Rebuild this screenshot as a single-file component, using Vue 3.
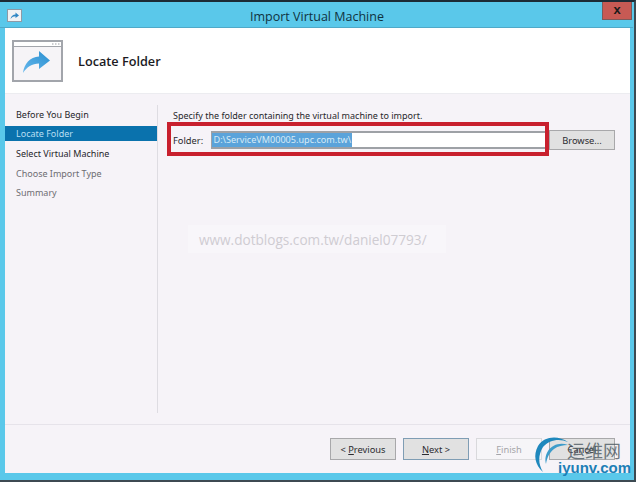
<script setup>
const steps = [
  { label: 'Before You Begin', state: 'normal' },
  { label: 'Locate Folder', state: 'active' },
  { label: 'Select Virtual Machine', state: 'normal' },
  { label: 'Choose Import Type', state: 'muted' },
  { label: 'Summary', state: 'muted' }
]
</script>

<template>
  <div class="page">
    <div class="window">
      <div class="titlebar">
        <svg class="app-icon" width="15" height="13" viewBox="0 0 15 13">
          <rect x="0.5" y="0.5" width="14" height="12" fill="#f2f2f4" stroke="#8e9aa6" />
          <path d="M3.5 10 C4 7 6 5.5 8.500 5.500 L8.500 3.500 L12 6.500 L8.500 9 L8.500 7.300 C6.500 7.300 5 8 3.500 10Z" fill="#2f86c4" />
        </svg>
        <div class="title">Import Virtual Machine</div>
        <div class="close">x</div>
      </div>
      <div class="client">
        <div class="header">
          <svg class="wizard-icon" width="51" height="42" viewBox="0 0 51 42">
            <defs>
              <linearGradient id="arrowFill" x1="0" y1="1" x2="1" y2="0">
                <stop offset="0" stop-color="#67b8ec" />
                <stop offset="1" stop-color="#2a8fd0" />
              </linearGradient>
            </defs>
            <rect x="1" y="1" width="49" height="40" fill="#f6f4f7" stroke="#a2a5ab" stroke-width="2" />
            <rect x="2" y="2" width="47" height="4" fill="#ffffff" />
            <line x1="2" y1="6.500" x2="49" y2="6.500" stroke="#a2a5ab" />
            <path d="M40 4H41.500M43 4H44.500M46 4H47.500" stroke="#9a9da3" fill="none" />
            <path d="M11 33 C12 24 18 17 27 16.500 L27 11 L38 20.500 L27 29 L27 23.500 C20 23.500 15 27 11 33Z" fill="url(#arrowFill)" />
          </svg>
          <div class="heading">Locate Folder</div>
        </div>
        <div class="body">
          <div class="sidebar">
            <div
              v-for="step in steps"
              :key="step.label"
              class="step"
              :class="step.state"
            >{{ step.label }}</div>
          </div>
          <div class="content">
            <div class="intro">Specify the folder containing the virtual machine to import.</div>
            <div class="folder-row">
              <label class="folder-label">Folder:</label>
              <div class="input"><span class="selected">D:\ServiceVM00005.upc.com.tw\</span></div>
              <div class="btn browse">Browse...</div>
            </div>
          </div>
        </div>
        <div class="footer">
          <div class="btn"><span>&lt; <u>P</u>revious</span></div>
          <div class="btn focused"><span><u>N</u>ext &gt;</span></div>
          <div class="btn disabled"><span><u>F</u>inish</span></div>
          <div class="btn"><span>Cancel</span></div>
        </div>
      </div>
    </div>

    <div class="annotation"></div>
    <div class="watermark">www.dotblogs.com.tw/daniel07793/</div>
    <div class="logo">
      <svg width="62" height="50" viewBox="0 0 62 50">
        <path d="M36 8 C26 1 12 2 6 12 C1 21 3 31 11 38 C6 30 6 21 11 13 C17 6 27 4 36 8Z" fill="#1f88bd" />
        <path d="M36 11 C28 8 20 11 16 17 C13 22 13 26 14 30 C15 24 17 19 22 15 C26 12 31 11 36 11Z" fill="#3d9cca" />
      </svg>
      <span class="logo-cn">运维网</span>
      <span class="logo-en">iyunv.com</span>
    </div>
  </div>
</template>

<style>
html, body {
  margin: 0;
  background: #ffffff;
}
</style>

<style scoped>
.page {
  position: relative;
  width: 638px;
  height: 484px;
  overflow: hidden;
  background: #ffffff;
  font-family: "Open Sans", "Noto Sans", sans-serif;
}
.window {
  box-sizing: border-box;
  width: 636px;
  height: 482px;
  border-top: 2px solid #1c2b36;
  border-right: 2px solid #3d4a52;
  border-bottom: 2px solid #3d4a52;
  background: #5ac8ea;
  padding: 0 4px 7px 5px;
  display: flex;
  flex-direction: column;
}
.titlebar {
  height: 26px;
  flex: none;
  margin-left: -5px;
  margin-right: -3px;
  position: relative;
  display: flex;
  align-items: center;
  justify-content: center;
  border-bottom: 1px solid #4fa9c8;
  box-sizing: border-box;
}
.app-icon {
  position: absolute;
  left: 7px;
  top: 7px;
}
.title {
  font-size: 12.500px;
  color: #10323f;
  margin-left: 1px;
  margin-top: 3px;
}
.close {
  position: absolute;
  right: 1px;
  top: 0;
  width: 30px;
  height: 18px;
  box-sizing: border-box;
  background: #c75a54;
  border: 1px solid #7d5a5a;
  border-top: none;
  color: #1a1a1a;
  font: bold 13px/15px "Liberation Sans", sans-serif;
  text-align: center;
}
.client {
  flex: 1;
  display: flex;
  flex-direction: column;
  background: #f6f3f8;
  min-height: 0;
}
.header {
  height: 66px;
  flex: none;
  background: #ffffff;
  border-bottom: 1px solid #ececf0;
  box-sizing: border-box;
  display: flex;
  align-items: center;
  padding-left: 7px;
}
.wizard-icon {
  flex: none;
}
.heading {
  margin-left: 15px;
  font-size: 12.700px;
  font-weight: 600;
  color: #1b1b1f;
}
.body {
  flex: 1;
  display: flex;
  min-height: 0;
  padding-top: 11px;
}
.sidebar {
  width: 152px;
  height: 308px;
  flex: none;
  border-right: 1px solid #dedce2;
  box-sizing: content-box;
}
.step {
  height: 19.500px;
  box-sizing: border-box;
  font-size: 9px;
  line-height: 20px;
  padding-left: 11px;
  color: #26262a;
  font-family: "Noto Sans", sans-serif;
}
.step.active {
  background: #0a72ad;
  color: #b9dff2;
  height: 15px;
  line-height: 16px;
  margin: 1.500px 0 3px;
}
.step.muted {
  color: #6d6d72;
}
.content {
  flex: 1;
  padding: 0 15px 0 15px;
}
.intro {
  font-size: 9px;
  line-height: 21px;
  font-family: "Noto Sans", sans-serif;
  color: #27272b;
}
.folder-row {
  display: flex;
  align-items: center;
  margin-top: 4px;
  height: 20px;
  position: relative;
}
.folder-label {
  width: 37.500px;
  flex: none;
  font-size: 9.300px;
  font-family: "Noto Sans", sans-serif;
  color: #27272b;
}
.input {
  flex: 1;
  height: 18px;
  box-sizing: border-box;
  background: #ffffff;
  border-top: 2px solid #9ea1a6;
  border-bottom: 2px solid #9ea1a6;
  border-left: 1px solid #9ea1a6;
  display: flex;
  align-items: center;
}
.selected {
  background: #5ba3da;
  color: #d7ebf7;
  font-size: 9.100px;
  line-height: 14px;
  padding: 0 1px 0 2px;
  white-space: nowrap;
  font-family: "Noto Sans", sans-serif;
}
.btn {
  width: 66px;
  height: 22px;
  box-sizing: border-box;
  flex: none;
  background: #e1e1e1;
  border: 1px solid #a8a8aa;
  font-size: 9.300px;
  font-family: "Noto Sans", sans-serif;
  color: #2c2c30;
  display: flex;
  align-items: center;
  justify-content: center;
}
.browse {
  height: 20px;
  width: 66px;
}
.footer {
  flex: none;
  height: 49px;
  box-sizing: border-box;
  border-top: 1px solid #e6e3ea;
  display: flex;
  gap: 7px;
  justify-content: flex-end;
  padding: 13px 15px 0 0;
}
.focused {
  border-color: #7f9db4;
}
.disabled {
  background: #f6f5f8;
  border-color: #d9d9dc;
  color: #a5a5a9;
}
.annotation {
  position: absolute;
  left: 167px;
  top: 122px;
  width: 382px;
  height: 34px;
  box-sizing: border-box;
  border: 4px solid #c8202e;
  pointer-events: none;
}
.watermark {
  position: absolute;
  left: 188px;
  top: 225px;
  width: 258px;
  height: 28px;
  box-sizing: border-box;
  background: #f8f6fa;
  padding-left: 11px;
  font-size: 13.600px;
  line-height: 30px;
  color: #cfccd2;
  white-space: nowrap;
  font-family: "Open Sans", sans-serif;
}
.logo {
  position: absolute;
  left: 532px;
  top: 434px;
  width: 106px;
  height: 50px;
}
.logo svg {
  position: absolute;
  left: 0;
  top: 0;
}
.logo-cn {
  position: absolute;
  left: 35px;
  top: 6px;
  font-size: 18px;
  line-height: 20px;
  color: #4e5b63;
  font-family: "Noto Sans CJK SC", sans-serif;
  opacity: 0.8;
}
.logo-en {
  position: absolute;
  left: 26px;
  top: 25px;
  font-size: 15px;
  font-weight: 700;
  line-height: 18px;
  color: #1d7fb6;
  font-family: "Liberation Sans", sans-serif;
}
</style>
